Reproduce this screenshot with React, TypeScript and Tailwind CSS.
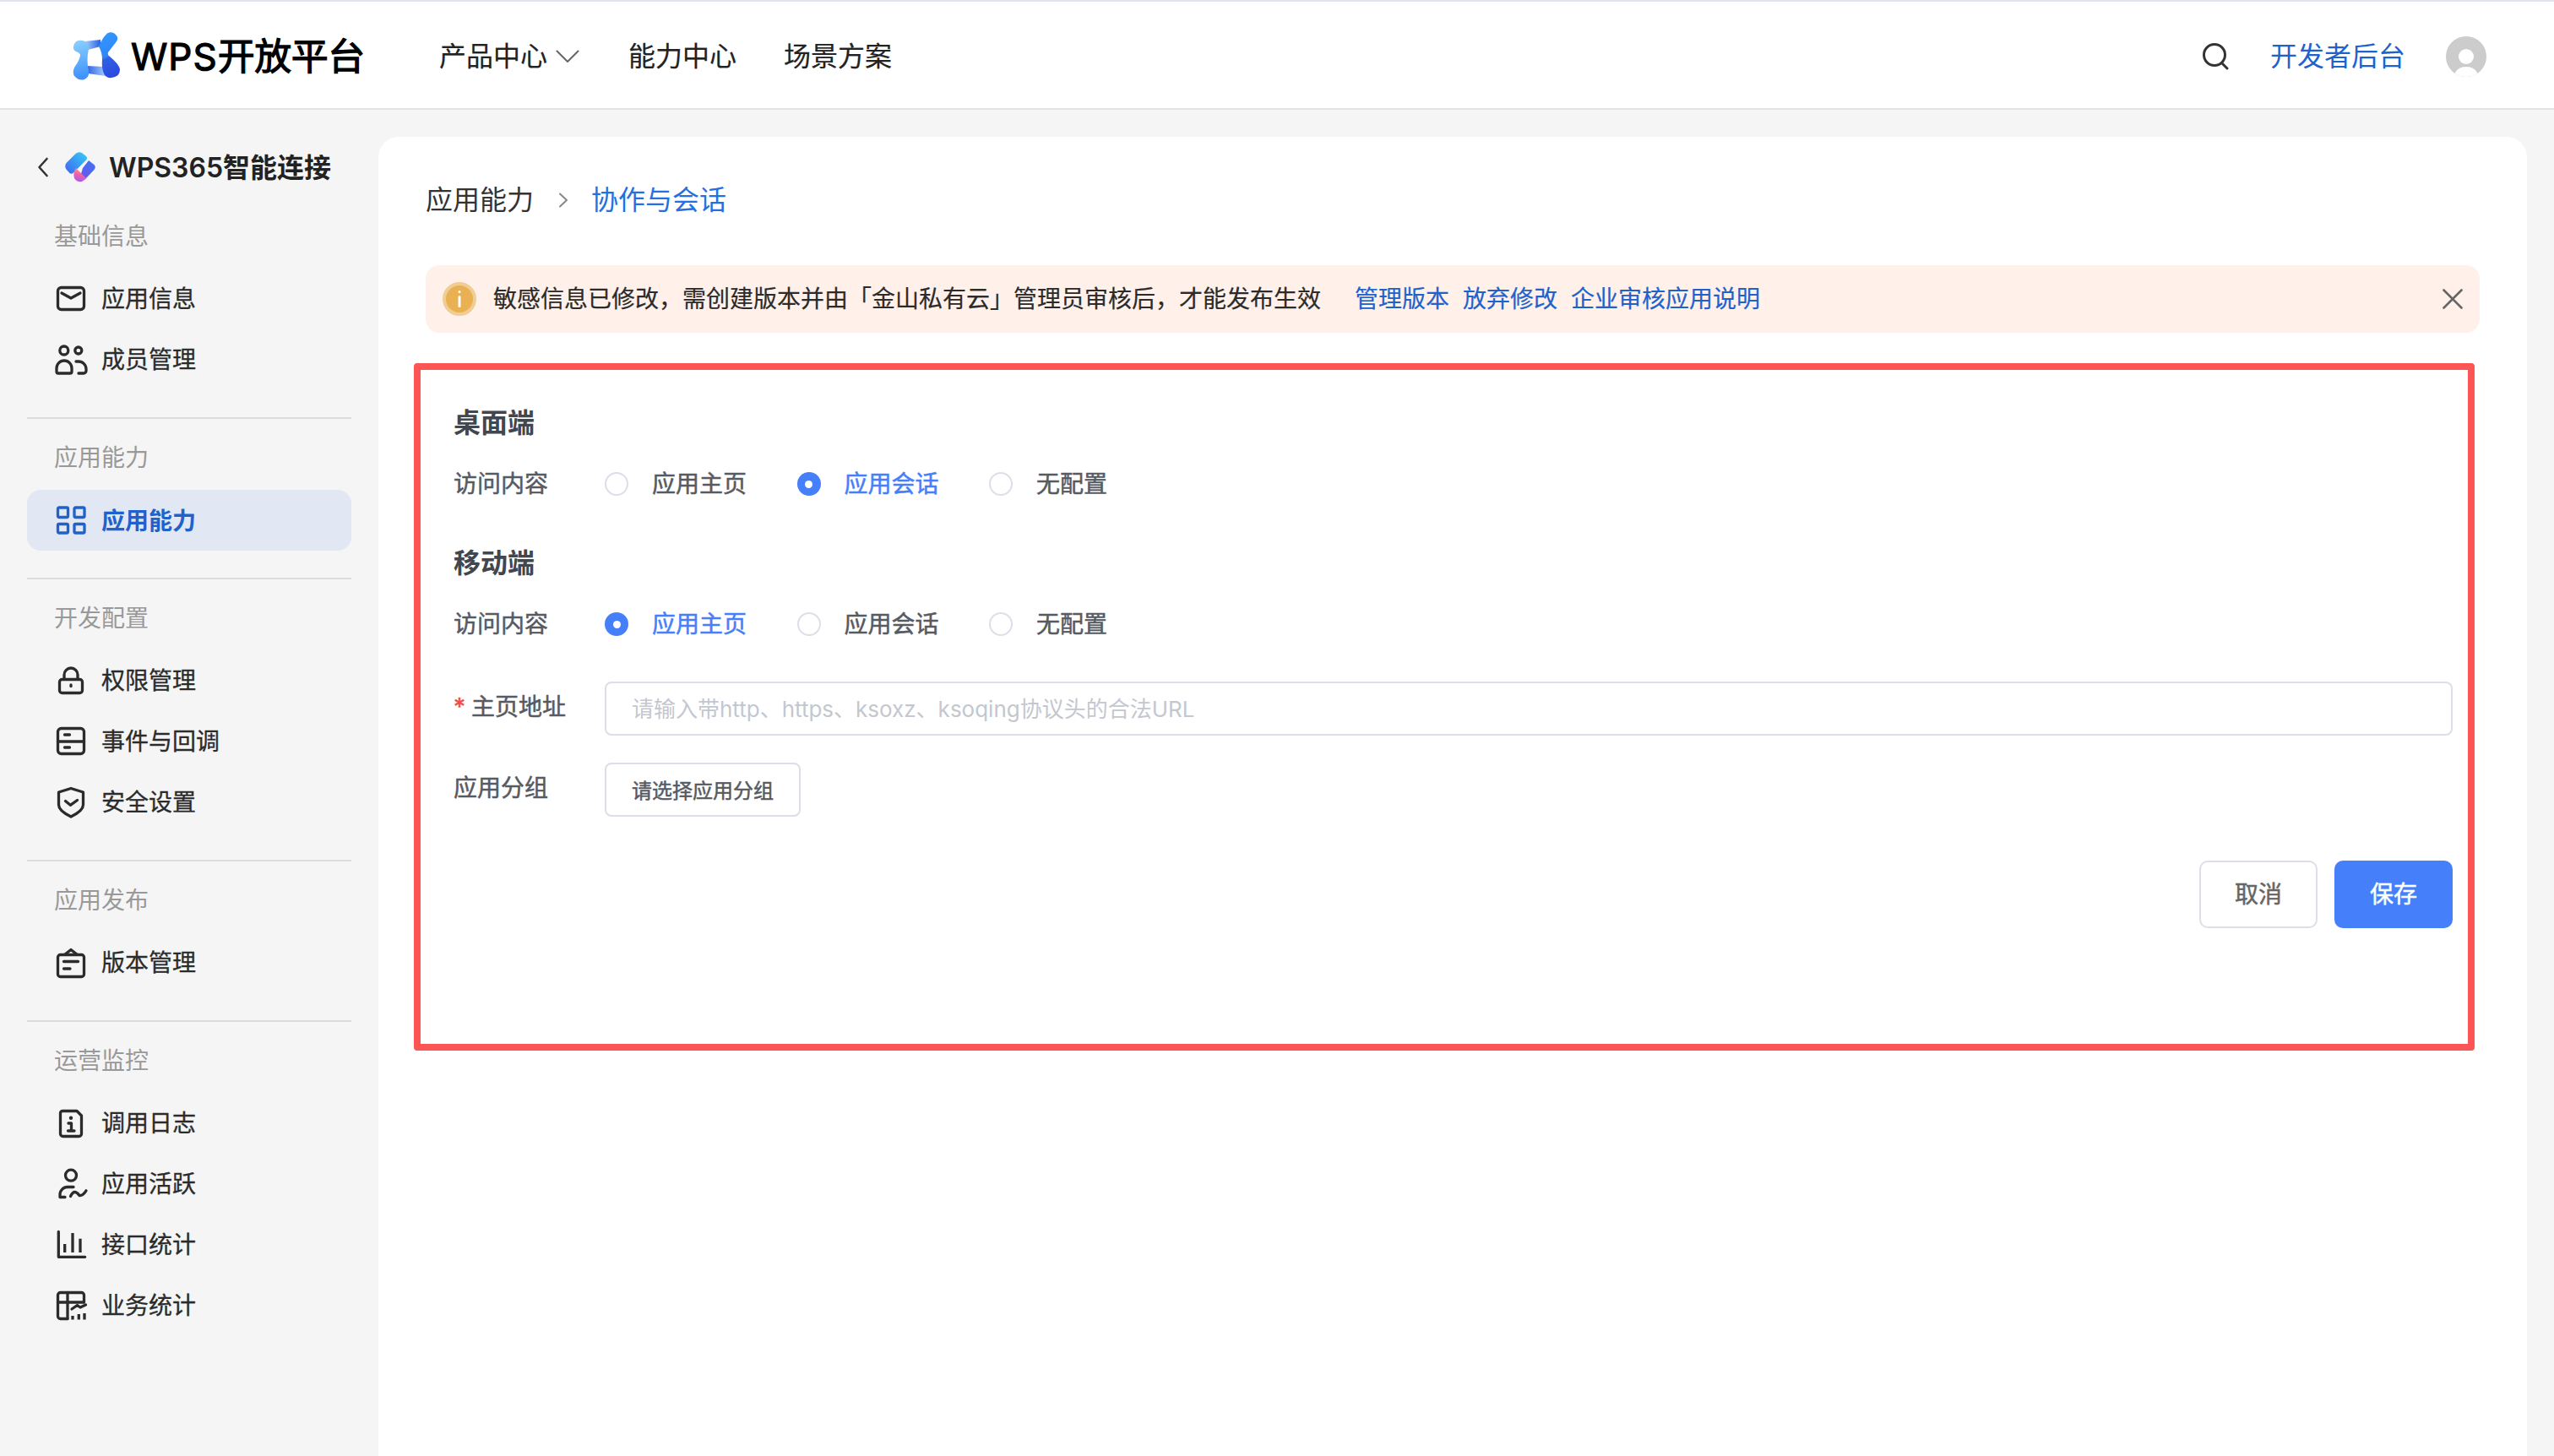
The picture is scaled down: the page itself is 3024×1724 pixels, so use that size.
import type { ReactNode } from "react"

function WpsLogo() {
  return (
    <svg width="56" height="57" viewBox="0 0 56 57" className="shrink-0 -mt-[1px]">
      <defs>
        <linearGradient id="lgLeft" x1="0.3" y1="0" x2="0.4" y2="1">
          <stop offset="0" stopColor="#8ad0ff" />
          <stop offset="1" stopColor="#3d90fb" />
        </linearGradient>
        <linearGradient id="lgRight" x1="0.4" y1="0" x2="0.6" y2="1">
          <stop offset="0" stopColor="#2f98ff" />
          <stop offset="0.5" stopColor="#2f86f8" />
          <stop offset="0.55" stopColor="#2f5fe6" />
          <stop offset="1" stopColor="#2b49dd" />
        </linearGradient>
        <linearGradient id="lgTop" x1="0" y1="0" x2="1" y2="0">
          <stop offset="0" stopColor="#a9d4ff" />
          <stop offset="1" stopColor="#2a5fe0" />
        </linearGradient>
        <linearGradient id="lgBot" x1="0" y1="0" x2="1" y2="0">
          <stop offset="0" stopColor="#2f62e6" />
          <stop offset="1" stopColor="#a4cdff" />
        </linearGradient>
      </defs>
      <path d="M14 11 L33 9 L33 17 L18 21Z" fill="url(#lgTop)" />
      <path d="M17 40 L37 41 L39 52 L18 49Z" fill="url(#lgBot)" />
      <path
        d="M1 17 Q2 11 7 10 Q13 9 17 13 Q20 16 19 20 Q16 33 19 46 Q20 53 14 56 Q8 58 3 53 Q-1 49 2 42 Q9 32 9 27 Q8 24 4 23 Q0 21 1 17Z"
        fill="url(#lgLeft)"
      />
      <path
        d="M31 17 Q35 7 41 1.5 Q46 -1 50 2 Q55 6 52 11 L42 24 Q41 27 44 29 Q55 38 56 44 Q56 51 50 53 Q42 56 38 51 Q34 44 35 33 Q35 24 31 17Z"
        fill="url(#lgRight)"
      />
    </svg>
  )
}

function AppLogo() {
  return (
    <svg width="36" height="36" viewBox="0 0 36 36" className="shrink-0">
      <defs>
        <linearGradient id="alA" x1="0" y1="1" x2="1" y2="0">
          <stop offset="0" stopColor="#3c63f0" />
          <stop offset="1" stopColor="#38cdf6" />
        </linearGradient>
        <linearGradient id="alB" x1="0.7" y1="0" x2="0.3" y2="1">
          <stop offset="0" stopColor="#3f73f5" />
          <stop offset="1" stopColor="#6a55ee" />
        </linearGradient>
        <linearGradient id="alC" x1="0.6" y1="0" x2="0.4" y2="1">
          <stop offset="0" stopColor="#f7a08c" />
          <stop offset="0.5" stopColor="#ef5fa8" />
          <stop offset="1" stopColor="#a55cee" />
        </linearGradient>
      </defs>
      <path d="M1.5 13 L12.5 2 Q16 -1 20 1 L25 5 Q27 7 25 9.5 L9.5 25 Q7.5 26.5 5.5 25 L1.5 20.5 Q-1 17 1.5 13Z" fill="url(#alA)" />
      <path d="M28 10 L34.5 15 Q37 18 34.5 21 L24 32 Q22.5 33 21 32 L18 29 L21 19Z" fill="url(#alB)" />
      <path d="M13 19 L25 31 Q21 36 16.5 35 Q13 34.5 11 31 Q9 25 13 19Z" fill="url(#alC)" />
    </svg>
  )
}

function Icon({ children, stroke = "#2b2b2b" }: { children: ReactNode; stroke?: string }) {
  return (
    <svg
      width="44"
      height="44"
      viewBox="0 0 44 44"
      fill="none"
      stroke={stroke}
      strokeWidth="3.3"
      strokeLinecap="round"
      strokeLinejoin="round"
      className="shrink-0"
    >
      {children}
    </svg>
  )
}

const icons: Record<string, ReactNode> = {
  mail: (
    <>
      <rect x="6.5" y="8.5" width="31" height="26" rx="4" />
      <path d="M11 15 L22 21 L33 15" />
    </>
  ),
  users: (
    <>
      <circle cx="13.8" cy="11" r="5" />
      <circle cx="30.8" cy="11" r="4" />
      <path d="M5 32 a9 9 0 0 1 18 0 v4 a2 2 0 0 1 -2 2 H7 a2 2 0 0 1 -2 -2Z" />
      <path d="M28 24 h3 a9 9 0 0 1 9 9 v2 a3 3 0 0 1 -3 3 H31" />
    </>
  ),
  lock: (
    <>
      <rect x="8.5" y="20.5" width="27" height="16" rx="3" />
      <path d="M14 20 v-5 a8 8 0 0 1 16 0 v5" />
      <path d="M22 27 v1.5" />
    </>
  ),
  event: (
    <>
      <rect x="6.5" y="6.5" width="31" height="30" rx="4" />
      <path d="M6.5 22 H37.5" />
      <path d="M14.5 14 H20.5" />
      <path d="M14.5 29 H20.5" />
    </>
  ),
  shield: (
    <>
      <path d="M22 5.5 L36.5 10 V25 Q36.5 32 22 39 Q7.5 32 7.5 25 V10Z" />
      <path d="M15.5 20.5 L21.3 25.3 L29.5 19.5" />
    </>
  ),
  version: (
    <>
      <rect x="6.5" y="12.5" width="31" height="26" rx="3" />
      <path d="M15 12 L22 6.5 L29 12" />
      <path d="M13.5 20.5 H30.5" />
      <path d="M13.5 29 H21" />
    </>
  ),
  log: (
    <>
      <path d="M12 7.5 H29 L34.5 13 V34.5 a3 3 0 0 1 -3 3 H12.5 a3 3 0 0 1 -3 -3 V10 a2.5 2.5 0 0 1 2.5 -2.5Z" />
      <circle cx="22" cy="15.7" r="2.2" fill="#2b2b2b" stroke="none" />
      <path d="M19 22 H22.5 V31 M18.5 31 H26" />
    </>
  ),
  activity: (
    <>
      <circle cx="22" cy="11.7" r="6.5" />
      <path d="M25 25.5 H18 a9 9 0 0 0 -9 9 V37.5 H15" />
      <path d="M21.5 36.5 Q24 31.5 26.5 31.5 Q29 31.5 32 35.5 Q36 36 40 29.8" />
    </>
  ),
  bars: (
    <>
      <path d="M7.3 6.5 V36.3 H38.7" />
      <path d="M14.7 21 V31" strokeLinecap="butt" />
      <path d="M24 8 V31" strokeLinecap="butt" />
      <path d="M33 14.7 V31" strokeLinecap="butt" />
    </>
  ),
  table: (
    <>
      <path d="M18 37.5 H9.5 a3 3 0 0 1 -3 -3 V9.5 a3 3 0 0 1 3 -3 H34.5 a3 3 0 0 1 3 3 V18" />
      <path d="M18 6.5 V37.5 M6.5 18 H37" />
      <path d="M23 26 L29.5 21.5 L33 24 L39.5 21" />
      <path d="M24 34 V38.5 M31.3 32 V38.5 M38 31 V38.5" strokeLinecap="butt" />
    </>
  ),
}

const groups = [
  {
    title: "基础信息",
    items: [
      { icon: "mail", label: "应用信息" },
      { icon: "users", label: "成员管理" },
    ],
  },
  { title: "应用能力", items: [{ icon: "grid", label: "应用能力", active: true }] },
  {
    title: "开发配置",
    items: [
      { icon: "lock", label: "权限管理" },
      { icon: "event", label: "事件与回调" },
      { icon: "shield", label: "安全设置" },
    ],
  },
  { title: "应用发布", items: [{ icon: "version", label: "版本管理" }] },
  {
    title: "运营监控",
    items: [
      { icon: "log", label: "调用日志" },
      { icon: "activity", label: "应用活跃" },
      { icon: "bars", label: "接口统计" },
      { icon: "table", label: "业务统计" },
    ],
  },
]

function Sidebar() {
  return (
    <aside className="w-[448px] shrink-0 pt-8">
      <div className="h-[72px] mb-2 flex items-center">
        <svg width="14" height="24" viewBox="0 0 14 24" fill="none" stroke="#333" strokeWidth="2.6" strokeLinecap="round" strokeLinejoin="round" className="ml-[44px] mr-[19px]">
          <path d="M11.5 2 L2.5 12 L11.5 22" />
        </svg>
        <AppLogo />
        <span className="ml-4 pt-[2px] text-[32px] font-semibold text-[#222]">WPS365智能连接</span>
      </div>

      {groups.map((group, i) => (
        <div key={group.title}>
          {i > 0 && <div className="mx-8 h-[2px] bg-[#dcdcdc] mt-8 mb-2" />}
          <div className="h-[76px] flex items-center pl-[64px] text-[28px] text-[#999]">{group.title}</div>
          {group.items.map((item) => (
            <div
              key={item.label}
              className={
                item.active
                  ? "mx-8 h-[72px] rounded-2xl bg-[#e1e7f3] flex items-center gap-[14px] pl-[30px] text-[28px] font-semibold text-[#1f62cc]"
                  : "mx-8 h-[72px] rounded-2xl flex items-center gap-[14px] pl-[30px] text-[28px] text-[#2b2b2b] [-webkit-text-stroke:0.3px]"
              }
            >
              {item.active ? (
                <Icon stroke="#1f62cc">
                  <g strokeLinejoin="miter">
                    <rect x="6.5" y="7" width="12" height="11.5" rx="1.5" />
                    <rect x="26" y="7" width="12" height="11.5" rx="1.5" />
                    <rect x="6.5" y="26.5" width="12" height="10.5" rx="1.5" />
                    <rect x="26" y="26.5" width="12" height="10.5" rx="1.5" />
                  </g>
                </Icon>
              ) : (
                <Icon>{icons[item.icon]}</Icon>
              )}
              <span className={item.active ? "pt-[2px]" : ""}>{item.label}</span>
            </div>
          ))}
        </div>
      ))}
    </aside>
  )
}

function Radio({ label, checked }: { label: string; checked?: boolean }) {
  return (
    <div className="flex items-center gap-7 mr-[59.5px]">
      {checked ? (
        <span className="w-7 h-7 rounded-full bg-[#4580fa] flex items-center justify-center">
          <span className="w-[9px] h-[9px] rounded-full bg-white" />
        </span>
      ) : (
        <span className="w-7 h-7 rounded-full border-2 border-[#dcdfe8] bg-white" />
      )}
      <span className={checked ? "text-[28px] text-[#4580fa] [-webkit-text-stroke:0.5px]" : "text-[28px] text-[#555a63] [-webkit-text-stroke:0.5px]"}>{label}</span>
    </div>
  )
}

function RadioRow({ checked }: { checked: string }) {
  return (
    <div className="mt-[26px] h-12 flex items-center">
      <div className="w-[179px] shrink-0 text-[28px] text-[#555a63] [-webkit-text-stroke:0.5px]">访问内容</div>
      {["应用主页", "应用会话", "无配置"].map((o) => (
        <Radio key={o} label={o} checked={o === checked} />
      ))}
    </div>
  )
}

export default function App() {
  return (
    <div className="w-[3024px] h-[1724px] overflow-hidden bg-[#f5f5f5] flex flex-col [font-family:Inter,'Noto_Sans_CJK_SC',sans-serif]">
      <header className="h-[130px] shrink-0 bg-white border-t-2 border-t-[#dfe4ef] border-b-2 border-b-[#e3e3e3] flex items-center pt-[3px] pl-[86px] pr-20">
        <WpsLogo />
        <span className="ml-[13px] w-[275px] text-[44px] text-black whitespace-nowrap tracking-[-0.5px] [-webkit-text-stroke:1.2px]">
          <span className="tracking-[1px]">WPS</span>开放平台
        </span>
        <nav className="ml-[90px] flex items-center text-[32px] text-[#222] [-webkit-text-stroke:0.2px]">
          <span>产品中心</span>
          <svg width="28" height="16" viewBox="0 0 28 16" fill="none" stroke="#666" strokeWidth="2" strokeLinecap="round" strokeLinejoin="round" className="ml-[10px]">
            <path d="M1.5 1.5 L14 14 L26.5 1.5" />
          </svg>
          <span className="ml-[58px]">能力中心</span>
          <span className="ml-14">场景方案</span>
        </nav>
        <div className="ml-auto flex items-center">
          <svg width="32" height="32" viewBox="0 0 32 32" fill="none" stroke="#333" strokeWidth="3" strokeLinecap="round">
            <circle cx="15" cy="14" r="12.5" />
            <path d="M24 24 L30 30" />
          </svg>
          <span className="ml-[49px] mr-[-2px] text-[32px] text-[#1f62cc]">开发者后台</span>
          <svg width="48" height="48" viewBox="0 0 48 48" className="ml-[50px]">
            <defs>
              <clipPath id="avatarClip">
                <circle cx="24" cy="24" r="24" />
              </clipPath>
            </defs>
            <circle cx="24" cy="24" r="24" fill="#cccccc" />
            <g clipPath="url(#avatarClip)">
              <circle cx="24" cy="24" r="9" fill="#fff" />
              <ellipse cx="24" cy="47" rx="14" ry="11" fill="#fff" />
            </g>
          </svg>
        </div>
      </header>

      <div className="flex flex-1 min-h-0">
        <Sidebar />

        <main className="flex-1 mt-8 mr-8 bg-white rounded-t-[24px]">
          {/* breadcrumb */}
          <div className="mt-11 h-[62px] ml-[56px] flex items-center text-[32px]">
            <span className="text-[#333]">应用能力</span>
            <svg width="12" height="18" viewBox="0 0 12 18" fill="none" stroke="#888" strokeWidth="2" strokeLinecap="round" strokeLinejoin="round" className="ml-[29px] mr-[27px]">
              <path d="M2 1.5 L10 9 L2 16.5" />
            </svg>
            <span className="text-[#2470e0]">协作与会话</span>
          </div>

          {/* notice */}
          <div className="mt-[46px] ml-[56px] mr-[56px] h-20 rounded-2xl bg-[#fff1ea] flex items-center pl-5 pr-5 text-[28px] text-[#2b2b2b] [-webkit-text-stroke:0.2px]">
            <span className="w-10 h-10 rounded-full bg-[#e9b152] border-[4px] border-[#f0cd95] flex items-center justify-center">
              <svg width="4" height="20" viewBox="0 0 4 20" fill="#fff">
                <rect x="0.5" y="0" width="3" height="3" rx="1.5" />
                <rect x="0.5" y="6" width="3" height="14" rx="1.5" />
              </svg>
            </span>
            <span className="ml-5">敏感信息已修改，需创建版本并由「金山私有云」管理员审核后，才能发布生效</span>
            <div className="ml-10 flex gap-4 text-[#1f62cc]">
              <span>管理版本</span>
              <span>放弃修改</span>
              <span>企业审核应用说明</span>
            </div>
            <svg width="24" height="24" viewBox="0 0 24 24" fill="none" stroke="#666" strokeWidth="2.6" strokeLinecap="round" className="ml-auto">
              <path d="M1.5 1.5 L22.5 22.5 M22.5 1.5 L1.5 22.5" />
            </svg>
          </div>

          {/* form, framed */}
          <section className="mt-9 ml-[42px] w-[2440px] h-[814px] border-8 border-[#fb5555] rounded-[4px] pt-[37px] pl-[39px] pr-[18px]">
            <h2 className="h-12 pt-[3px] flex items-center text-[32px] font-semibold text-[#41464f]">桌面端</h2>
            <RadioRow checked="应用会话" />
            <h2 className="mt-11 h-12 pt-[3px] flex items-center text-[32px] font-semibold text-[#41464f]">移动端</h2>
            <RadioRow checked="应用主页" />

            <div className="mt-11 flex items-start">
              <div className="w-[179px] shrink-0 h-14 pt-[3px] flex items-center text-[28px] text-[#555a63] [-webkit-text-stroke:0.5px]">
                <span className="w-[21px] text-[#f04a4a]">*</span>
                <span>主页地址</span>
              </div>
              <input
                placeholder="请输入带http、https、ksoxz、ksoqing协议头的合法URL"
                className="flex-1 h-16 px-[30px] border-2 border-[#dcdfe8] rounded-lg text-[26px] outline-none placeholder:text-[#c4c7cf]"
              />
            </div>

            <div className="mt-8 flex items-start">
              <div className="w-[179px] shrink-0 h-14 pt-[3px] flex items-center text-[28px] text-[#555a63] [-webkit-text-stroke:0.5px]">应用分组</div>
              <button className="w-[232px] h-16 pt-[3px] border-2 border-[#dcdfe8] rounded-lg text-[24px] text-[#555a63] bg-white [-webkit-text-stroke:0.5px]">请选择应用分组</button>
            </div>

            <div className="mt-[52px] flex justify-end gap-5">
              <button className="w-[140px] h-20 border-2 border-[#dcdfe8] rounded-[10px] text-[28px] text-[#666] bg-white [-webkit-text-stroke:0.5px]">取消</button>
              <button className="w-[140px] h-20 rounded-[10px] text-[28px] text-white bg-[#4580fa] [-webkit-text-stroke:0.5px]">保存</button>
            </div>
          </section>
        </main>
      </div>
    </div>
  )
}
